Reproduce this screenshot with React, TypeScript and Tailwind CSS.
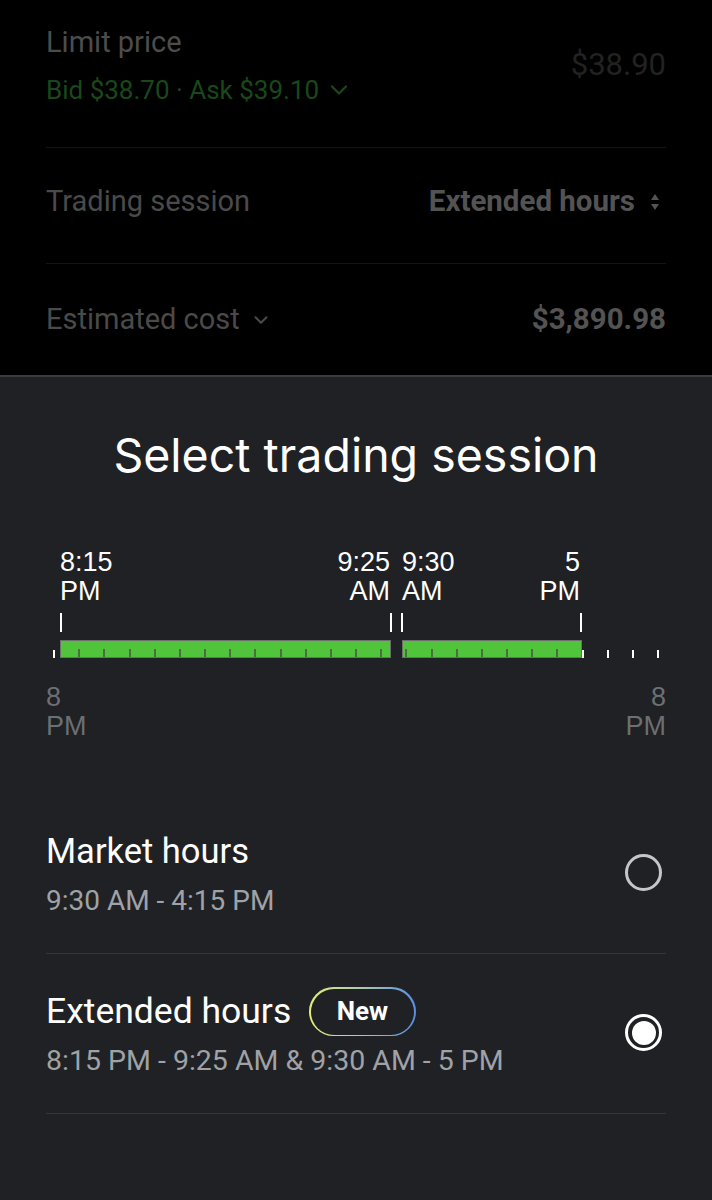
import { ChevronDown } from "lucide-react";

const GRID0 = 54;
const STEP = 25.17;

function Tick({ x, top, h, color }: { x: number; top: number; h: number; color: string }) {
  return (
    <div
      className={`absolute w-[2px] ${color}`}
      style={{ left: x - 1, top, height: h }}
    />
  );
}

function Radio({ checked }: { checked: boolean }) {
  if (checked) {
    return (
      <div className="mr-[4px] h-[37px] w-[37px] rounded-full border-[3px] border-white flex items-center justify-center">
        <div className="h-[24px] w-[24px] rounded-full bg-white" />
      </div>
    );
  }
  return <div className="mr-[4px] h-[37px] w-[37px] rounded-full border-[3px] border-[#c4c6c9]" />;
}

export default function App() {
  // hour marks inside the green bars
  const innerTicks: number[] = [];
  for (let k = 1; k <= 20; k++) innerTicks.push(GRID0 + STEP * k);
  const outerTicks = [0, 21, 22, 23, 24].map((k) => GRID0 + STEP * k);

  return (
    <div className="w-[712px] h-[1200px] bg-black overflow-hidden flex flex-col font-['Roboto',sans-serif]">
      {/* Dimmed order form behind the sheet */}
      <div className="px-[46px]">
        <div className="h-[148px] pb-[16px] flex items-center justify-between border-b border-[#141414]">
          <div className="flex flex-col">
            <span className="text-[29px] leading-[36px] text-[#4c4c4c]">Limit price</span>
            <span className="mt-[12px] text-[26px] leading-[36px] text-[#1a481a] flex items-center gap-[6px]">
              Bid $38.70 · Ask $39.10
              <ChevronDown className="h-[28px] w-[28px]" strokeWidth={2} />
            </span>
          </div>
          <span className="text-[31px] text-[#222222]">$38.90</span>
        </div>
        <div className="h-[116px] pb-[8px] flex items-center justify-between border-b border-[#141414]">
          <span className="text-[29px] text-[#4a4a4a]">Trading session</span>
          <span className="pr-[6px] flex items-center gap-[15px] text-[29.5px] font-bold text-[#535353]">
            Extended hours
            <svg width="10" height="18" viewBox="0 0 10 18">
              <path d="M5 1 L9 7 L1 7 Z" fill="#535353" />
              <path d="M5 17 L9 11 L1 11 Z" fill="#535353" />
            </svg>
          </span>
        </div>
        <div className="h-[111px] flex items-center justify-between">
          <span className="text-[29px] text-[#4a4a4a] flex items-center gap-[10px]">
            Estimated cost
            <ChevronDown className="h-[22px] w-[22px]" strokeWidth={2.2} />
          </span>
          <span className="text-[29.5px] font-bold text-[#535353]">$3,890.98</span>
        </div>
      </div>

      {/* Bottom sheet */}
      <div className="flex-1 bg-[#202124] border-t-2 border-[#3b3c40] flex flex-col">
        <h1 className="pt-[50px] text-center text-[46.5px] leading-[56px] text-white font-['Inter',sans-serif] font-normal">
          Select trading session
        </h1>

        {/* Session timeline */}
        <div className="relative mt-[65px] h-[193px] font-['Liberation_Sans',sans-serif] text-[27px] leading-[29px]">
          <div className="absolute left-[60px] top-0 text-white">
            <div>8:15</div>
            <div>PM</div>
          </div>
          <div className="absolute right-[322px] top-0 text-white text-right">
            <div>9:25</div>
            <div>AM</div>
          </div>
          <div className="absolute left-[402px] top-0 text-white">
            <div>9:30</div>
            <div>AM</div>
          </div>
          <div className="absolute right-[132px] top-0 text-white text-right">
            <div>5</div>
            <div>PM</div>
          </div>

          <Tick x={61} top={65} h={19} color="bg-white" />
          <Tick x={391} top={65} h={19} color="bg-white" />
          <Tick x={402} top={65} h={19} color="bg-white" />
          <Tick x={581} top={65} h={19} color="bg-white" />

          <div className="absolute left-[60px] top-[92px] h-[18px] w-[331px] bg-[#50c43a] border-[1.5px] border-[#6b6e6a]" />
          <div className="absolute left-[402px] top-[92px] h-[18px] w-[180px] bg-[#50c43a] border-[1.5px] border-[#6b6e6a]" />

          {innerTicks.map((x) => (
            <Tick key={x} x={x} top={101} h={8} color="bg-[#4f6b45]" />
          ))}
          {outerTicks.map((x) => (
            <Tick key={x} x={x} top={102} h={8} color="bg-white" />
          ))}

          <div className="absolute left-[46px] top-[135px] text-[#6c6f73]">
            <div>8</div>
            <div>PM</div>
          </div>
          <div className="absolute right-[46px] top-[135px] text-[#6c6f73] text-right">
            <div>8</div>
            <div>PM</div>
          </div>
        </div>

        {/* Options */}
        <div className="mt-[53px] px-[46px]">
          <div className="pt-[33px] pb-[35px] flex items-center justify-between border-b border-[#36373b]">
            <div className="flex flex-col">
              <div className="h-[49px] flex items-center text-[34.5px] text-white">Market hours</div>
              <div className="mt-[8px] text-[28px] leading-[34px] text-[#9fa2a7]">9:30 AM - 4:15 PM</div>
            </div>
            <Radio checked={false} />
          </div>
          <div className="pt-[33px] pb-[35px] flex items-center justify-between border-b border-[#36373b]">
            <div className="flex flex-col">
              <div className="h-[49px] flex items-center gap-[18px] text-[35.5px] text-white">
                Extended hours
                <div className="rounded-full p-[1.5px] bg-gradient-to-r from-[#e2ec78] via-[#a9c9b0] to-[#5b8de0]">
                  <div className="h-[46px] rounded-full bg-[#202124] px-[26px] flex items-center text-[26px] font-bold text-white">
                    New
                  </div>
                </div>
              </div>
              <div className="mt-[8px] text-[28.5px] leading-[34px] text-[#9fa2a7]">
                8:15 PM - 9:25 AM &amp; 9:30 AM - 5 PM
              </div>
            </div>
            <Radio checked={true} />
          </div>
        </div>
      </div>
    </div>
  );
}
